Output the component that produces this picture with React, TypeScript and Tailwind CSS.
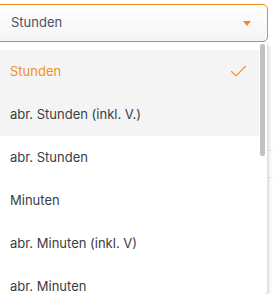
import { Check } from 'lucide-react';

const options = [
  'Stunden',
  'abr. Stunden (inkl. V.)',
  'abr. Stunden',
  'Minuten',
  'abr. Minuten (inkl. V)',
  'abr. Minuten',
];

export default function App() {
  const selected = 0;
  const hovered = 1;

  return (
    <div className="relative h-[294px] w-[273px] overflow-hidden bg-white font-['Inter',sans-serif] text-[13px]">
      {/* page behind the dropdown */}
      <div className="absolute inset-0 flex flex-col pt-[150px]">
        <div className="h-[27px] border-t border-[#ececec]" />
        <div className="h-[27px] border-t border-[#ececec]" />
      </div>

      <div className="relative -ml-[8px] w-[276px] pt-[4px]">
        <button className="flex h-[38px] w-full items-center justify-between rounded-[5px] border border-[#ec8a1c] bg-gradient-to-b from-white to-[#f4f4f4] pl-[18px] pr-[16px] text-[#4a5160]">
          <span>Stunden</span>
          <svg width="8" height="5" viewBox="0 0 8 5" className="fill-[#ec8a1c]">
            <path d="M0 0h8L4 5z" />
          </svg>
        </button>

        <div className="relative mt-px h-[251px] overflow-hidden rounded-b-[4px] border-r border-[#e2e2e2] bg-white pt-[7px] shadow-[0_2px_4px_rgba(0,0,0,0.25)]">
          <ul className="pr-[8px]">
            {options.map((label, i) => (
              <li
                key={label}
                className={`flex h-[43px] items-center justify-between pl-[18px] pr-[10px] ${
                  i === selected || i === hovered ? 'bg-[#f4f4f4]' : ''
                } ${i === selected ? 'text-[#f0902a]' : 'text-[#3a3d44]'}`}
              >
                <span>{label}</span>
                {i === selected && <Check size={21} strokeWidth={1.3} className="text-[#f0902a]" />}
              </li>
            ))}
          </ul>
          <div className="absolute right-[2px] top-[1px] h-[112px] w-[5px] rounded-[2px] bg-[#c1c1c1]" />
        </div>
      </div>
    </div>
  );
}
